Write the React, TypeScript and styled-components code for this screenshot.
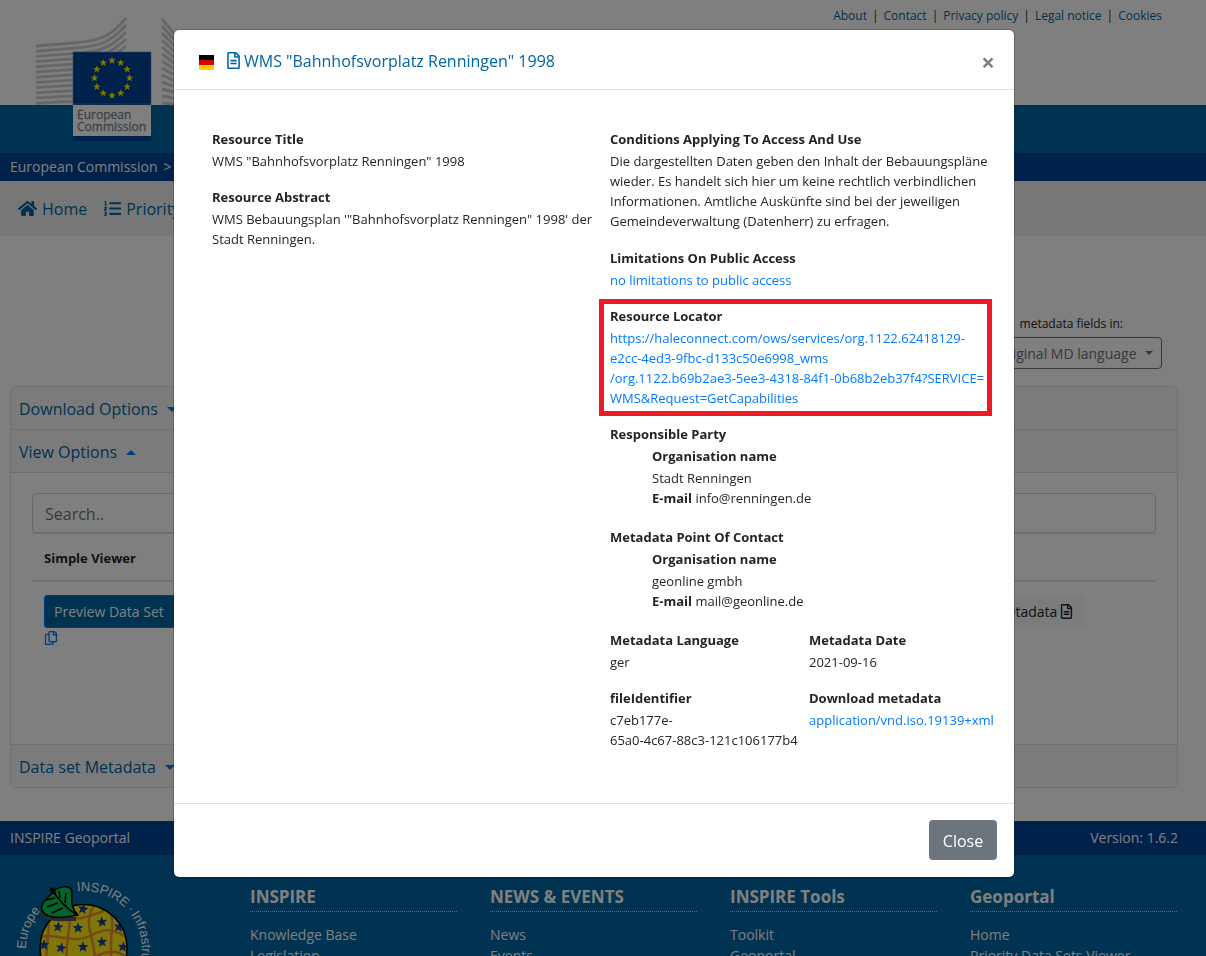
import React from 'react';
import styled, { createGlobalStyle } from 'styled-components';
import { FaHome, FaListOl, FaRegCopy, FaRegFileAlt } from 'react-icons/fa';

const GlobalStyle = createGlobalStyle`
  *, *::before, *::after { box-sizing: border-box; }
  body {
    margin: 0;
    overflow: hidden;
    font-family: "Open Sans", "Noto Sans", sans-serif;
    font-size: 13px;
    line-height: 20px;
    color: #212529;
    background: #fff;
  }
  a { color: #007bff; text-decoration: none; }
  button, input, select { font-family: inherit; }
`;

const Page = styled.div`
  height: 100vh;
  overflow: hidden;
`;

const Masthead = styled.header`
  position: relative;
`;

const TopLinks = styled.nav`
  height: 105px;
  padding: 6px 44px 0 0;
  display: flex;
  justify-content: flex-end;
  gap: 5px;
  font-size: 12px;
  line-height: 20px;
  a { color: #0065a2; }
`;

const Band = styled.div`
  height: 48px;
  background: #0065a2;
`;

const LogoLink = styled.a`
  position: absolute;
  left: 36px;
  top: 16px;
  svg { display: block; }
`;

const LogoText = styled.text`
  font: 12px "Open Sans", sans-serif;
  fill: #7f868a;
  stroke: #7f868a;
  stroke-width: 0.3px;
`;

const Crumbs = styled.nav`
  height: 28px;
  padding: 0 10px;
  display: flex;
  align-items: center;
  gap: 6px;
  background: #004494;
  font-size: 14px;
  color: #fff;
  a { color: #fff; }
`;

const MainNav = styled.nav`
  height: 55px;
  padding: 0 18px;
  display: flex;
  align-items: center;
  gap: 17px;
  background: #efefef;
`;

const NavLink = styled.a`
  display: flex;
  align-items: center;
  gap: 5px;
  font-size: 16px;
  color: #0065a2;
`;

const Main = styled.main`
  padding: 78px 28px 33px 10px;
`;

const LanguageField = styled.div`
  display: flex;
  flex-direction: column;
  align-items: flex-end;
  gap: 3px;
  margin: 0 16px 17px 0;
`;

const LanguageLabel = styled.label`
  padding-right: 39px;
  font-size: 12px;
`;

const SelectWrap = styled.span`
  position: relative;
  display: block;
  &::after {
    content: "";
    position: absolute;
    right: 9px;
    top: 14px;
    border: 4px solid transparent;
    border-top-color: #6c757d;
    border-bottom: 0;
  }
`;

const Select = styled.select`
  appearance: none;
  height: 32px;
  padding: 0 24px 0 9px;
  border: 1px solid #6c757d;
  border-radius: 4px;
  background: transparent;
  font-size: 14px;
  color: #6c757d;
`;

const Card = styled.section`
  border: 1px solid #dfdfdf;
  border-radius: 5px;
  overflow: hidden;
`;

const CardToggle = styled.button<{ $open?: boolean }>`
  display: flex;
  align-items: center;
  gap: 9px;
  width: 100%;
  height: 43px;
  padding: 2px 8px 0;
  border: 0;
  border-bottom: 1px solid #dfdfdf;
  background: #f7f7f7;
  font-size: 16px;
  color: #0065a2;
  &:last-child { border-bottom: 0; height: 42px; }
  &::after {
    content: "";
    border: 5px solid transparent;
    border-top-color: ${(p) => (p.$open ? 'transparent' : '#007bff')};
    border-bottom-color: ${(p) => (p.$open ? '#007bff' : 'transparent')};
    border-top-width: ${(p) => (p.$open ? 0 : 5)}px;
    border-bottom-width: ${(p) => (p.$open ? 5 : 0)}px;
  }
`;

const CardBody = styled.div`
  min-height: 272px;
  padding: 20px 21px;
  border-bottom: 1px solid #dfdfdf;
`;

const SearchInput = styled.input`
  display: block;
  width: 100%;
  height: 40px;
  padding: 2px 12px 0;
  border: 1px solid #ced4da;
  border-radius: 4px;
  background: #fff;
  font-size: 16px;
  &::placeholder { color: #6c757d; }
`;

const Table = styled.table`
  width: 100%;
  table-layout: fixed;
  border-collapse: collapse;
  th {
    height: 47px;
    padding: 3px 12px 0;
    border-top: 1px solid #dee2e6;
    border-bottom: 2px solid #dee2e6;
    text-align: left;
    font-weight: 700;
  }
  th:last-child { width: 186px; }
  td {
    padding: 13px 12px;
    vertical-align: top;
  }
`;

const RowButton = styled.button<{ $primary?: boolean }>`
  display: inline-flex;
  align-items: center;
  gap: 2px;
  height: 33px;
  padding: 0 ${(p) => (p.$primary ? 20 : 10)}px 0 ${(p) => (p.$primary ? 9 : 12)}px;
  border: 1px solid ${(p) => (p.$primary ? '#007bff' : '#f8f9fa')};
  border-radius: 3px;
  background: ${(p) => (p.$primary ? '#0065a2' : '#f8f9fa')};
  font-size: 14px;
  color: ${(p) => (p.$primary ? '#fff' : '#212529')};
`;

const CopyButton = styled.button`
  display: block;
  margin-top: 3px;
  padding: 0;
  border: 0;
  background: none;
  color: #007bff;
  svg { display: block; }
`;

const FooterBar = styled.div`
  height: 34px;
  padding: 0 28px 0 10px;
  display: flex;
  align-items: center;
  justify-content: space-between;
  background: #004494;
  font-size: 14px;
  color: #fff;
`;

const Footer = styled.footer`
  padding: 20px 29px 40px 10px;
  display: grid;
  grid-template-columns: repeat(5, 1fr);
  gap: 33px;
  background: #0065a2;
  color: #fff;
`;

const ArcText = styled.text`
  font: 13px "Liberation Sans", sans-serif;
  fill: #fff;
`;

const FooterTitle = styled.h2`
  margin: 10px 0 12px;
  padding-bottom: 2px;
  border-bottom: 1px dotted rgba(255, 255, 255, 0.7);
  font-size: 17px;
  line-height: 24px;
`;

const FooterList = styled.ul`
  margin: 0;
  padding: 0;
  list-style: none;
  font-size: 14px;
  line-height: 21px;
  a { color: #fff; }
`;

const Backdrop = styled.div`
  position: fixed;
  inset: 0;
  padding: 30px 18px 30px 0;
  display: flex;
  justify-content: center;
  align-items: flex-start;
  background: rgba(0, 0, 0, 0.5);
`;

const Dialog = styled.div`
  width: 100%;
  max-width: 840px;
  background: #fff;
  border-radius: 5px;
  box-shadow: 0 0 0 1px rgba(0, 0, 0, 0.2);
`;

const DialogHeader = styled.div`
  height: 60px;
  padding: 0 18px 0 25px;
  display: flex;
  align-items: center;
  gap: 11px;
  border-bottom: 1px solid #dee2e6;
`;

const DialogTitle = styled.h1`
  flex: 1;
  margin: 0;
  padding-top: 2px;
  display: flex;
  align-items: center;
  gap: 2px;
  font-size: 16px;
  font-weight: 400;
  line-height: 24px;
  color: #0065a2;
`;

const Flag = styled.span`
  width: 15px;
  height: 15px;
  margin-top: 5px;
  background: linear-gradient(#000 0 5px, #d00 5px 10px, #ffce00 10px 15px);
`;

const CloseIcon = styled.button`
  width: 16px;
  padding: 4px 0 0;
  border: 0;
  background: none;
  font-size: 24px;
  font-weight: 700;
  line-height: 22px;
  color: #7f7f7f;
`;

const DialogBody = styled.div`
  padding: 39px 36px 53px 38px;
  display: grid;
  grid-template-columns: repeat(2, minmax(0, 1fr));
  gap: 30px;
  white-space: nowrap;
`;

const Section = styled.section<{ $gap?: number; $highlight?: boolean }>`
  position: relative;
  margin-bottom: ${(p) => p.$gap ?? 16}px;
  &:last-child { margin-bottom: 0; }
  &::after {
    content: "";
    display: ${(p) => (p.$highlight ? 'block' : 'none')};
    position: absolute;
    inset: -7px -14px -8px -11px;
    border: 5px solid #ed1c24;
    pointer-events: none;
  }
`;

const Heading = styled.h2`
  margin: 0 0 2px;
  font-size: 13px;
  font-weight: 700;
  line-height: 20px;
`;

const Text = styled.p`
  margin: 0;
`;

const Party = styled.div`
  padding-left: 42px;
`;

const Pair = styled.div`
  display: grid;
  grid-template-columns: repeat(2, minmax(0, 1fr));
  gap: 30px;
  margin-bottom: 16px;
  &:last-child { margin-bottom: 0; }
`;

const DialogFooter = styled.div`
  padding: 16px 17px 17px;
  display: flex;
  justify-content: flex-end;
  border-top: 1px solid #dee2e6;
`;

const CloseButton = styled.button`
  width: 68px;
  height: 40px;
  padding: 2px 0 0;
  border: 0;
  border-radius: 4px;
  background: #6c757d;
  font-size: 16px;
  color: #fff;
`;

const star = (cx: number, cy: number, r: number, turn = 0) =>
  Array.from({ length: 10 }, (_, i) => {
    const a = (Math.PI / 5) * i - Math.PI / 2 + turn;
    const d = i % 2 ? r * 0.42 : r;
    return `${(cx + d * Math.cos(a)).toFixed(2)},${(cy + d * Math.sin(a)).toFixed(2)}`;
  }).join(' ');

function CommissionLogo() {
  const left = Array.from({ length: 12 }, (_, i) => {
    const y = 30 + i * 5.2;
    const bend = 26 + i * 5.6;
    return `M0 ${y} L36 ${bend + 1 - i * 0.3} C62 ${bend - 1} 74 ${bend - 4} 90 ${2 + i * 7}`;
  });
  const right = Array.from({ length: 13 }, (_, i) => `M126 ${3 + i * 7} L166 ${Math.max(3 + i * 7, 52 + i * 3.2)}`);
  return (
    <svg width="166" height="125" viewBox="0 0 166 125" role="img" aria-label="European Commission">
      <g fill="none" stroke="#cfcfd1" strokeWidth="2.9">
        {left.map((d) => <path key={d} d={d} />)}
        {right.map((d) => <path key={d} d={d} />)}
      </g>
      <rect x="37" y="36" width="78" height="89" fill="#004494" />
      <rect x="37" y="36" width="78" height="52" fill="#004494" stroke="#6f8fc0" strokeWidth="0.6" />
      {Array.from({ length: 12 }, (_, i) => {
        const a = (Math.PI / 6) * i;
        return <polygon key={i} points={star(76 + 17.5 * Math.sin(a), 62 - 17.5 * Math.cos(a), 3.9)} fill="#ffed00" />;
      })}
      <rect x="37" y="89" width="78" height="31" fill="#fff" />
      <LogoText x="41" y="103">European</LogoText>
      <LogoText x="41" y="115">Commission</LogoText>
    </svg>
  );
}

function InspireLogo() {
  const stars = [
    [73, 40, 0.2], [48, 58, 0.1], [68, 59, 0], [92, 53, -0.1], [109, 58, 0.2], [34, 76, 0],
    [51, 79, 0.2], [73, 78, 0], [92, 73, -0.1], [113, 78, 0.1],
  ];
  return (
    <svg width="150" height="150" viewBox="-10 -4 150 150" role="img" aria-label="INSPIRE Infrastructure Europe">
      <g transform="translate(-10 -10)">
        <defs>
          <clipPath id="fruit"><circle cx="73.500" cy="79" r="43" /></clipPath>
          <path id="arc" d="M74 138 A58 58 0 0 1 74 22 A58 58 0 0 1 74 138" />
        </defs>
        <circle cx="73.500" cy="79" r="43.500" fill="#ffee14" />
        <g clipPath="url(#fruit)">
          <g fill="none" stroke="#f0912d" strokeWidth="2.500">
            <path d="M38 50 C42 65 30 80 42 120" />
            <path d="M58 34 C66 55 48 78 62 120" />
            <path d="M86 34 C66 58 96 74 80 120" />
            <path d="M99 40 C108 55 94 74 106 110" />
            <path d="M30 68 C50 64 64 76 82 66 S108 64 120 70" />
            <path d="M56 48 C72 52 80 46 94 42" />
            <path d="M28 90 C50 84 64 98 84 88 S110 84 120 90" />
          </g>
          {stars.map(([x, y, t]) => <polygon key={`${x}-${y}`} points={star(x, y, 5.8, t)} fill="#1f3d9c" />)}
        </g>
        <circle cx="73.500" cy="79" r="43.500" fill="none" stroke="#000" strokeWidth="1.500" />
        <path d="M32 43 C34 52 52 50 66 50" fill="none" stroke="#555" strokeWidth="4" />
        <path d="M42 24 C47 17 62 15 62 23 C62 30 60 38 68 46 C54 49 36 51 32 41 C30 33 37 31 42 24 Z" fill="#0ac458" stroke="#000" strokeWidth="1.500" />
        <path d="M41 19 C47 29 54 38 67 46 M50 29 L49 22 M55 34 L56 24 M45 29 L36 31 M48 34 L37 38 M53 39 L42 44" fill="none" stroke="#000" strokeWidth="1.500" />
        <path d="M39 21 L44 18 L47 28 Z" fill="#000" />
        <ArcText><textPath href="#arc" startOffset="91">Europe</textPath></ArcText>
        <ArcText><textPath href="#arc" startOffset="175">INSPIRE</textPath></ArcText>
        <ArcText><textPath href="#arc" startOffset="230">·</textPath></ArcText>
        <ArcText><textPath href="#arc" startOffset="236">Infrastru</textPath></ArcText>
      </g>
    </svg>
  );
}

const topLinks = ['About', 'Contact', 'Privacy policy', 'Legal notice', 'Cookies'];

const footerColumns = [
  { title: 'INSPIRE', links: ['Knowledge Base', 'Legislation'] },
  { title: 'NEWS & EVENTS', links: ['News', 'Events'] },
  { title: 'INSPIRE Tools', links: ['Toolkit', 'Geoportal'] },
  { title: 'Geoportal', links: ['Home', 'Priority Data Sets Viewer'] },
];

const parties = [
  { role: 'Responsible Party', name: 'Stadt Renningen', mail: 'info@renningen.de' },
  { role: 'Metadata Point Of Contact', name: 'geonline gmbh', mail: 'mail@geonline.de' },
];

function Portal() {
  return (
    <Page>
      <Masthead>
        <TopLinks>
          {topLinks.map((label, i) => (
            <React.Fragment key={label}>
              {i > 0 && <span>|</span>}
              <a href="#">{label}</a>
            </React.Fragment>
          ))}
        </TopLinks>
        <Band />
        <LogoLink href="#"><CommissionLogo /></LogoLink>
      </Masthead>
      <Crumbs><a href="#">European Commission</a><span>&gt;</span></Crumbs>
      <MainNav>
        <NavLink href="#"><FaHome size={19} />Home</NavLink>
        <NavLink href="#"><FaListOl size={17} />Priority</NavLink>
      </MainNav>
      <Main>
        <LanguageField>
          <LanguageLabel htmlFor="language">metadata fields in:</LanguageLabel>
          <SelectWrap>
            <Select id="language"><option>Original MD language</option></Select>
          </SelectWrap>
        </LanguageField>
        <Card>
          <CardToggle>Download Options</CardToggle>
          <CardToggle $open>View Options</CardToggle>
          <CardBody>
            <SearchInput type="search" placeholder="Search.." aria-label="Search" />
            <Table>
              <thead><tr><th>Simple Viewer</th><th aria-label="Details" /></tr></thead>
              <tbody>
                <tr>
                  <td>
                    <RowButton $primary>Preview Data Set</RowButton>
                    <CopyButton aria-label="Copy link"><FaRegCopy size={14} /></CopyButton>
                  </td>
                  <td><RowButton>Metadata<FaRegFileAlt size={15} /></RowButton></td>
                </tr>
              </tbody>
            </Table>
          </CardBody>
          <CardToggle>Data set Metadata</CardToggle>
        </Card>
      </Main>
      <FooterBar><span>INSPIRE Geoportal</span><span>Version: 1.6.2</span></FooterBar>
      <Footer>
        <InspireLogo />
        {footerColumns.map((column) => (
          <div key={column.title}>
            <FooterTitle>{column.title}</FooterTitle>
            <FooterList>
              {column.links.map((link) => <li key={link}><a href="#">{link}</a></li>)}
            </FooterList>
          </div>
        ))}
      </Footer>
    </Page>
  );
}

function MetadataDialog() {
  return (
    <Backdrop>
      <Dialog role="dialog" aria-labelledby="dialog-title">
        <DialogHeader>
          <Flag />
          <DialogTitle id="dialog-title"><FaRegFileAlt size={17} />WMS "Bahnhofsvorplatz Renningen" 1998</DialogTitle>
          <CloseIcon aria-label="Close">×</CloseIcon>
        </DialogHeader>
        <DialogBody>
          <div>
            <Section>
              <Heading>Resource Title</Heading>
              <Text>WMS "Bahnhofsvorplatz Renningen" 1998</Text>
            </Section>
            <Section>
              <Heading>Resource Abstract</Heading>
              <Text>WMS Bebauungsplan '"Bahnhofsvorplatz Renningen" 1998' der<br />Stadt Renningen.</Text>
            </Section>
          </div>
          <div>
            <Section $gap={17}>
              <Heading>Conditions Applying To Access And Use</Heading>
              <Text>
                Die dargestellten Daten geben den Inhalt der Bebauungspläne<br />
                wieder. Es handelt sich hier um keine rechtlich verbindlichen<br />
                Informationen. Amtliche Auskünfte sind bei der jeweiligen<br />
                Gemeindeverwaltung (Datenherr) zu erfragen.
              </Text>
            </Section>
            <Section>
              <Heading>Limitations On Public Access</Heading>
              <a href="#">no limitations to public access</a>
            </Section>
            <Section $highlight>
              <Heading>Resource Locator</Heading>
              <a href="#">
                https://haleconnect.com/ows/services/org.1122.62418129-<br />
                e2cc-4ed3-9fbc-d133c50e6998_wms<br />
                /org.1122.b69b2ae3-5ee3-4318-84f1-0b68b2eb37f4?SERVICE=<br />
                WMS&amp;Request=GetCapabilities
              </a>
            </Section>
            {parties.map((party) => (
              <Section key={party.role} $gap={19}>
                <Heading>{party.role}</Heading>
                <Party>
                  <Heading>Organisation name</Heading>
                  <Text>{party.name}</Text>
                  <Text><b>E-mail</b> {party.mail}</Text>
                </Party>
              </Section>
            ))}
            <Pair>
              <div><Heading>Metadata Language</Heading><Text>ger</Text></div>
              <div><Heading>Metadata Date</Heading><Text>2021-09-16</Text></div>
            </Pair>
            <Pair>
              <div><Heading>fileIdentifier</Heading><Text>c7eb177e-<br />65a0-4c67-88c3-121c106177b4</Text></div>
              <div><Heading>Download metadata</Heading><a href="#">application/vnd.iso.19139+xml</a></div>
            </Pair>
          </div>
        </DialogBody>
        <DialogFooter><CloseButton>Close</CloseButton></DialogFooter>
      </Dialog>
    </Backdrop>
  );
}

export default function App() {
  return (
    <>
      <GlobalStyle />
      <Portal />
      <MetadataDialog />
    </>
  );
}
